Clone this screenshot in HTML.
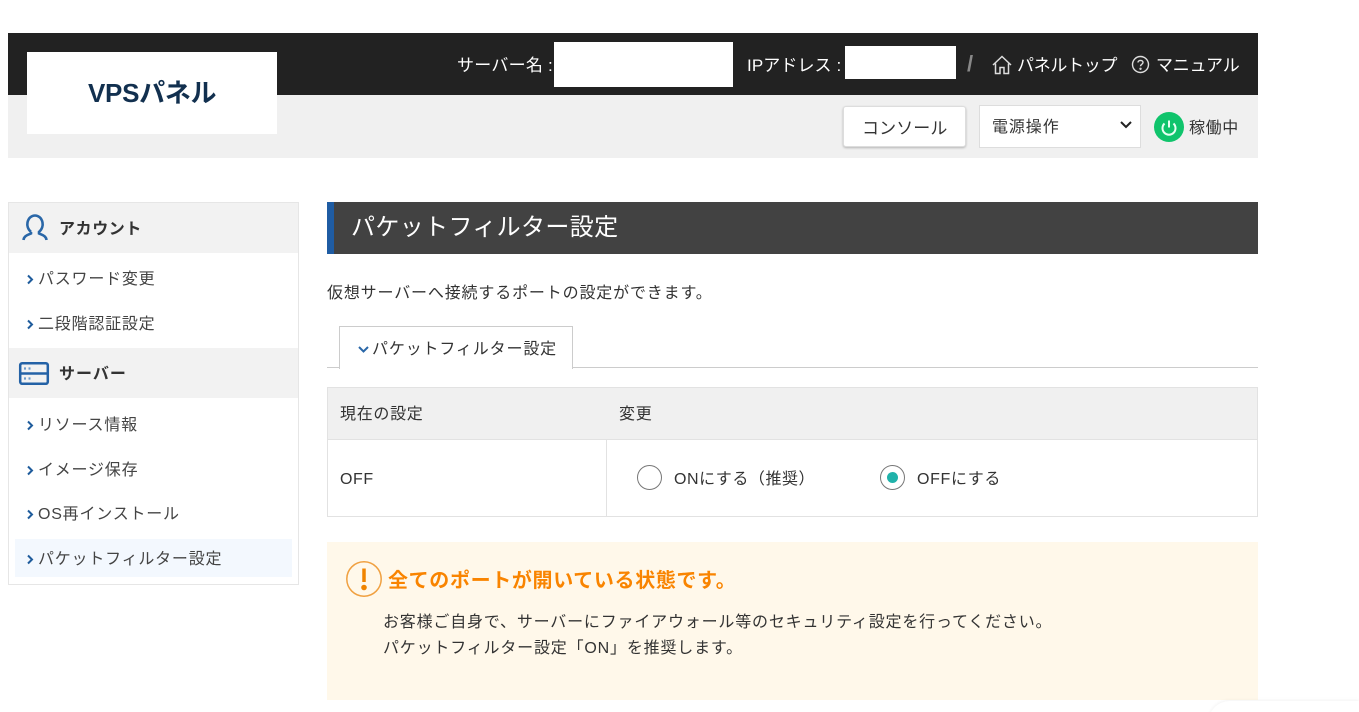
<!DOCTYPE html>
<html lang="ja"><head><meta charset="utf-8"><title>VPSパネル</title>
<style>
html,body{margin:0;padding:0;width:1359px;height:712px;overflow:hidden;background:#fff}
body{position:relative;font-family:"Liberation Sans","Noto Sans CJK JP",sans-serif;color:#333;font-size:16px}
.a{position:absolute}
.t{position:absolute;white-space:nowrap;line-height:24px;font-size:16px;letter-spacing:.78px;margin-top:2px}
svg{position:absolute;overflow:visible}
</style></head><body>
<div class="a" style="left:8px;top:33px;width:1250px;height:62px;background:#222"></div>
<div class="a" style="left:8px;top:95px;width:1250px;height:63px;background:#f0f0f0"></div>
<div class="a" style="left:27px;top:52px;width:250px;height:82px;background:#fff"></div>
<div class="t" style="left:88px;top:76px;margin-top:0;font-size:26px;line-height:34px;font-weight:700;color:#12304f;letter-spacing:-.3px">VPSパネル</div>
<div class="t" style="left:457px;top:52px;color:#fff;font-size:17px;letter-spacing:.25px">サーバー名 :</div>
<div class="a" style="left:554px;top:42px;width:179px;height:45px;background:#fff"></div>
<div class="t" style="left:747px;top:52px;color:#fff;font-size:17px;letter-spacing:.1px">IPアドレス :</div>
<div class="a" style="left:845px;top:46px;width:111px;height:33px;background:#fff"></div>
<div class="t" style="left:967px;top:50px;color:#888;font-size:22px;font-weight:700">/</div>
<svg style="left:992px;top:55px" width="20" height="20" viewBox="0 0 20 20" fill="none" stroke="#ddd" stroke-width="1.5"><path d="M1 10 10 1.500 19 10M3.500 8.500V18.500H8V12.500H12V18.500H16.500V8.500"/></svg>
<div class="t" style="left:1017px;top:52px;color:#fff;font-size:17px;letter-spacing:-.3px">パネルトップ</div>
<svg style="left:1131px;top:55px" width="19" height="19" viewBox="0 0 19 19" fill="none" stroke="#ddd" stroke-width="1.4"><circle cx="9.500" cy="9.500" r="8"/><path d="M7 7.500C7 4.800 12 4.800 12 7.500 12 9.300 9.500 9.300 9.500 11.200"/><circle cx="9.500" cy="13.800" r=".5"/></svg>
<div class="t" style="left:1156px;top:52px;color:#fff;font-size:17px;letter-spacing:-.2px">マニュアル</div>

<div class="a" style="left:843px;top:106px;width:121px;height:39px;background:#fff;border:1px solid #ddd;border-radius:3px;box-shadow:0 1px 2px rgba(0,0,0,.25)"></div>
<div class="t" style="left:862px;top:115px;font-size:17px;letter-spacing:.1px">コンソール</div>
<div class="a" style="left:979px;top:105px;width:160px;height:41px;background:#fff;border:1px solid #ddd"></div>
<div class="t" style="left:992px;top:114px;letter-spacing:.9px">電源操作</div>
<svg style="left:1120px;top:121px" width="12" height="8" viewBox="0 0 12 8" fill="none" stroke="#222" stroke-width="2"><path d="M1 1 6 6 11 1"/></svg>
<svg style="left:1154px;top:112px" width="30" height="30" viewBox="0 0 30 30"><circle cx="15" cy="15" r="15" fill="#10c46c"/><path d="M10.500 11.500A6.500 6.500 0 1 0 19.500 11.500" fill="none" stroke="#e8fff2" stroke-width="2"/><path d="M15 8.500V15.500" stroke="#e8fff2" stroke-width="2"/></svg>
<div class="t" style="left:1189px;top:115px;letter-spacing:.6px">稼働中</div>

<div class="a" style="left:8px;top:202px;width:289px;height:381px;border:1px solid #e6e6e6"></div>
<div class="a" style="left:9px;top:203px;width:289px;height:50px;background:#f2f2f2"></div>
<div class="a" style="left:9px;top:348px;width:289px;height:50px;background:#f2f2f2"></div>
<svg style="left:22px;top:214px" width="26" height="27" viewBox="0 0 26 27" fill="none" stroke="#2a67a8" stroke-width="2.600"><path d="M9 18C5.500 15 5 11 5.500 8.500 6.500 3.500 10 1.500 13 1.500S19.500 3.500 20.500 8.500C21 11 20.500 15 17 18V19.500C20 21 24 21.500 24.500 26M9 18V19.500C6 21 2 21.500 1.500 26"/></svg>
<div class="t" style="left:59px;top:216px;font-weight:700;letter-spacing:.6px">アカウント</div>
<svg style="left:19px;top:362px" width="30" height="23" viewBox="0 0 30 23" fill="none"><rect x="1.200" y="1.200" width="27.600" height="20.600" rx="2" stroke="#2462a6" stroke-width="2.500"/><path d="M1 11.500H29" stroke="#2462a6" stroke-width="2.500"/><path d="M5 6.500H7M9.500 6.500H11.500M5 16.500H7M9.500 16.500H11.500" stroke="#6d9bcc" stroke-width="2.200"/></svg>
<div class="t" style="left:59px;top:361px;font-weight:700;letter-spacing:1px">サーバー</div>

<div class="a" style="left:15px;top:539px;width:277px;height:38px;background:#f3f8fe"></div>
<svg style="left:27px;top:274px" width="7" height="12" viewBox="0 0 7 12" fill="none" stroke="#1f5c9c" stroke-width="2"><path d="M1 1.500 5 5.500 1 9.500"/></svg>
<div class="t" style="left:38px;top:266px;color:#444">パスワード変更</div>
<svg style="left:27px;top:319px" width="7" height="12" viewBox="0 0 7 12" fill="none" stroke="#1f5c9c" stroke-width="2"><path d="M1 1.500 5 5.500 1 9.500"/></svg>
<div class="t" style="left:38px;top:311px;color:#444">二段階認証設定</div>
<svg style="left:27px;top:420px" width="7" height="12" viewBox="0 0 7 12" fill="none" stroke="#1f5c9c" stroke-width="2"><path d="M1 1.500 5 5.500 1 9.500"/></svg>
<div class="t" style="left:38px;top:412px;color:#444">リソース情報</div>
<svg style="left:27px;top:465px" width="7" height="12" viewBox="0 0 7 12" fill="none" stroke="#1f5c9c" stroke-width="2"><path d="M1 1.500 5 5.500 1 9.500"/></svg>
<div class="t" style="left:38px;top:457px;color:#444">イメージ保存</div>
<svg style="left:27px;top:509px" width="7" height="12" viewBox="0 0 7 12" fill="none" stroke="#1f5c9c" stroke-width="2"><path d="M1 1.500 5 5.500 1 9.500"/></svg>
<div class="t" style="left:38px;top:501px;color:#444">OS再インストール</div>
<svg style="left:27px;top:554px" width="7" height="12" viewBox="0 0 7 12" fill="none" stroke="#1f5c9c" stroke-width="2"><path d="M1 1.500 5 5.500 1 9.500"/></svg>
<div class="t" style="left:38px;top:546px;color:#444">パケットフィルター設定</div>

<div class="a" style="left:327px;top:202px;width:931px;height:52px;background:#424242"></div>
<div class="a" style="left:327px;top:202px;width:7px;height:52px;background:#1f5ca3"></div>
<div class="t" style="left:351px;top:209px;margin-top:1px;color:#fff;font-size:24px;line-height:36px;letter-spacing:.36px">パケットフィルター設定</div>
<div class="t" style="left:327px;top:280px;letter-spacing:.84px">仮想サーバーへ接続するポートの設定ができます。</div>

<div class="a" style="left:327px;top:367px;width:931px;height:1px;background:#ccc"></div>
<div class="a" style="left:339px;top:326px;width:232px;height:42px;background:#fff;border:1px solid #ccc;border-bottom:0"></div>
<svg style="left:358px;top:346px" width="12" height="7" viewBox="0 0 12 7" fill="none" stroke="#2a67a8" stroke-width="2"><path d="M1 1 5.500 5.500 10 1"/></svg>
<div class="t" style="left:372px;top:336px;letter-spacing:.85px">パケットフィルター設定</div>

<div class="a" style="left:327px;top:387px;width:929px;height:128px;border:1px solid #e2e2e2"></div>
<div class="a" style="left:328px;top:388px;width:929px;height:51px;background:#f0f0f0;border-bottom:1px solid #e2e2e2"></div>
<div class="a" style="left:606px;top:440px;width:1px;height:76px;background:#e2e2e2"></div>
<div class="t" style="left:340px;top:401px;letter-spacing:.7px">現在の設定</div>
<div class="t" style="left:619px;top:401px;letter-spacing:.7px">変更</div>
<div class="t" style="left:340px;top:466px;letter-spacing:.6px">OFF</div>
<div class="a" style="left:637px;top:465px;width:23px;height:23px;border:1px solid #777;border-radius:50%;background:#fff"></div>
<div class="t" style="left:674px;top:466px;letter-spacing:.55px">ONにする（推奨）</div>
<div class="a" style="left:880px;top:465px;width:23px;height:23px;border:1px solid #777;border-radius:50%;background:#fff"></div>
<div class="a" style="left:887px;top:472px;width:11px;height:11px;border-radius:50%;background:#20b2aa"></div>
<div class="t" style="left:917px;top:466px;letter-spacing:.65px">OFFにする</div>

<div class="a" style="left:327px;top:542px;width:931px;height:158px;background:#fff8ea"></div>
<svg style="left:346px;top:561px" width="36" height="36" viewBox="0 0 36 36"><circle cx="18" cy="18" r="17.200" fill="none" stroke="#f0a040" stroke-width="1.500"/><path d="M18 7.500V21" stroke="#f08400" stroke-width="3.500"/><circle cx="18" cy="26.500" r="2.800" fill="#f08400"/></svg>
<div class="t" style="left:388px;top:565px;font-size:20px;line-height:28px;font-weight:700;color:#f98400;letter-spacing:.65px">全てのポートが開いている状態です。</div>
<div class="t" style="left:383px;top:609px;letter-spacing:.81px">お客様ご自身で、サーバーにファイアウォール等のセキュリティ設定を行ってください。</div>
<div class="t" style="left:383px;top:635px;letter-spacing:.81px">パケットフィルター設定「ON」を推奨します。</div>

<div class="a" style="left:1208px;top:701px;width:151px;height:30px;background:#fff;border-radius:22px 0 0 0;box-shadow:0 -1px 3px rgba(0,0,0,.05)"></div>
</body></html>
